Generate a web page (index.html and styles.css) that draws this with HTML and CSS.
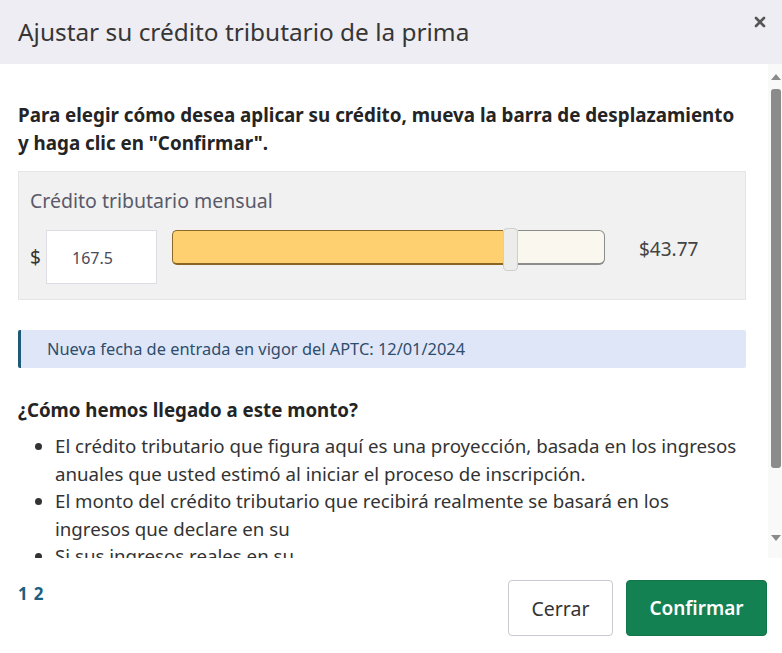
FILE: index.html
```html
<!DOCTYPE html>
<html lang="es">
<head>
<meta charset="utf-8">
<link rel="stylesheet" href="styles.css">
</head>
<body>
<div class="modal">
  <header class="modal-header">
    <h1 class="modal-title">Ajustar su crédito tributario de la prima</h1>
    <button class="close-btn" aria-label="Cerrar">
      <svg width="12" height="12" viewBox="0 0 12 12"><path d="M2 2 L10 10 M10 2 L2 10" stroke="#555" stroke-width="2.6" stroke-linecap="round"/></svg>
    </button>
  </header>

  <div class="modal-scroll">
    <div class="modal-body">
      <p class="intro">Para elegir cómo desea aplicar su crédito, mueva la barra de desplazamiento y haga clic en "Confirmar".</p>

      <div class="credit-box">
        <div class="credit-label">Crédito tributario mensual</div>
        <div class="credit-row">
          <span class="dollar">$</span>
          <div class="amount-input">167.5</div>
          <div class="slider">
            <div class="slider-fill"></div>
            <div class="slider-thumb"></div>
            <div class="slider-rest"></div>
          </div>
          <span class="remaining">$43.77</span>
        </div>
      </div>

      <div class="notice">Nueva fecha de entrada en vigor del APTC: 12/01/2024</div>

      <h2 class="section-title">¿Cómo hemos llegado a este monto?</h2>
      <ul class="reasons">
        <li>El crédito tributario que figura aquí es una proyección, basada en los ingresos anuales que usted estimó al iniciar el proceso de inscripción.</li>
        <li>El monto del crédito tributario que recibirá realmente se basará en los <span class="keep">ingresos que declare en su</span></li>
        <li>Si sus ingresos reales en su</li>
      </ul>
    </div>
    <div class="scrollbar">
      <div class="sb-arrow sb-up"></div>
      <div class="sb-thumb"></div>
      <div class="sb-space"></div>
      <div class="sb-arrow sb-down"></div>
    </div>
  </div>

  <footer class="modal-footer">
    <div class="pager"><span>1</span><span>2</span></div>
    <div class="actions">
      <button class="btn btn-secondary">Cerrar</button>
      <button class="btn btn-primary">Confirmar</button>
    </div>
  </footer>
</div>
</body>
</html>
```
FILE: styles.css
```css
* { box-sizing: border-box; }

html, body {
  margin: 0;
  padding: 0;
  background: #ffffff;
}

body {
  font-family: "Noto Sans", "Open Sans", sans-serif;
  color: #333;
}

.modal {
  width: 782px;
  height: 653px;
  display: flex;
  flex-direction: column;
  background: #fff;
  overflow: hidden;
}

.modal-header {
  height: 64px;
  flex: none;
  background: #eeedf3;
  display: flex;
  align-items: flex-start;
  justify-content: space-between;
  padding: 0 18px;
}

.modal-title {
  margin: 0;
  font-size: 24.4px;
  font-weight: 400;
  line-height: 64px;
  color: #363636;
}

.close-btn {
  border: 0;
  background: transparent;
  padding: 0;
  margin: 16px -2px 0 0;
  width: 12px;
  height: 12px;
  display: flex;
}

.modal-scroll {
  flex: none;
  height: 494px;
  display: flex;
}

.modal-body {
  flex: 1;
  overflow: hidden;
  padding: 37px 22px 0 18px;
}

.intro {
  margin: 0;
  font-size: 18.8px;
  font-weight: 700;
  line-height: 28px;
  color: #242424;
}

.credit-box {
  margin-top: 14px;
  background: #f1f1f1;
  border: 1px solid #e6e6e6;
  padding: 16px 11px 15px;
}

.credit-label {
  font-size: 19.5px;
  line-height: 26px;
  color: #5a5a6a;
}

.credit-row {
  margin-top: 16px;
  display: flex;
  align-items: flex-start;
}

.dollar {
  font-size: 19px;
  line-height: 54px;
  color: #333;
  width: 16px;
}

.amount-input {
  width: 111px;
  height: 54px;
  background: #fff;
  border: 1px solid #dcdce2;
  font-size: 16px;
  line-height: 54px;
  padding-left: 25px;
  color: #4a4a5a;
}

.slider {
  margin-left: 15px;
  width: 433px;
  height: 35px;
  display: flex;
  align-items: center;
}

.slider-fill {
  width: 331px;
  height: 35px;
  background: #ffd070;
  border: 1px solid #8a6a26;
  border-bottom: 2px solid #8a6421;
  border-right: 0;
  border-radius: 5px 0 0 5px;
}

.slider-thumb {
  width: 15px;
  height: 43px;
  margin-top: 4px;
  background: #ececea;
  border: 1px solid #cfcfcf;
  border-radius: 4px;
  flex: none;
}

.slider-rest {
  flex: 1;
  height: 35px;
  background: #faf8ee;
  border: 1px solid #8c8c8c;
  border-bottom-width: 2px;
  border-left: 0;
  border-radius: 0 6px 6px 0;
}

.remaining {
  margin-left: 34px;
  font-size: 19px;
  line-height: 38px;
  color: #444;
}

.notice {
  margin-top: 30px;
  height: 38px;
  background: #dfe6f8;
  border-left: 3px solid #1e5a78;
  border-radius: 2px;
  padding-left: 26px;
  font-size: 16.4px;
  line-height: 38px;
  color: #2e4d6c;
}

.section-title {
  margin: 30px 0 0;
  font-size: 18.7px;
  font-weight: 700;
  line-height: 24px;
  color: #242424;
}

.reasons {
  margin: 10px 0 0;
  padding-left: 37px;
  font-size: 18.7px;
  line-height: 27.5px;
  color: #333;
}

.keep {
  white-space: nowrap;
}

.scrollbar {
  width: 14px;
  flex: none;
  background: #f9f9f9;
  display: flex;
  flex-direction: column;
  align-items: center;
  padding: 10px 0 10px 2px;
}

.sb-arrow {
  width: 0;
  height: 0;
  border-left: 5px solid transparent;
  border-right: 5px solid transparent;
}

.sb-up {
  border-bottom: 6px solid #8a8a8a;
}

.sb-down {
  border-top: 6px solid #8a8a8a;
  margin-bottom: 7px;
}

.sb-thumb {
  margin-top: 9px;
  width: 10px;
  height: 379px;
  background: #8b8b8b;
  border-radius: 3px;
}

.sb-space {
  flex: 1;
}

.modal-footer {
  flex: 1;
  display: flex;
  justify-content: space-between;
  align-items: flex-start;
  padding: 23px 15px 0 18px;
}

.pager {
  display: flex;
  gap: 6px;
  font-size: 17px;
  font-weight: 700;
  line-height: 26px;
  color: #1d5f7f;
}

.actions {
  display: flex;
  gap: 13px;
  margin-top: -1px;
}

.btn {
  height: 56px;
  border-radius: 4px;
  font-family: "Noto Sans", "Open Sans", sans-serif;
  padding: 0;
}

.btn-secondary {
  width: 105px;
  background: #fff;
  border: 1px solid #c9c9cf;
  color: #333;
  font-size: 19.5px;
}

.btn-primary {
  width: 141px;
  background: #148152;
  border: 1px solid #117547;
  color: #fff;
  font-size: 19px;
  font-weight: 600;
}
```
